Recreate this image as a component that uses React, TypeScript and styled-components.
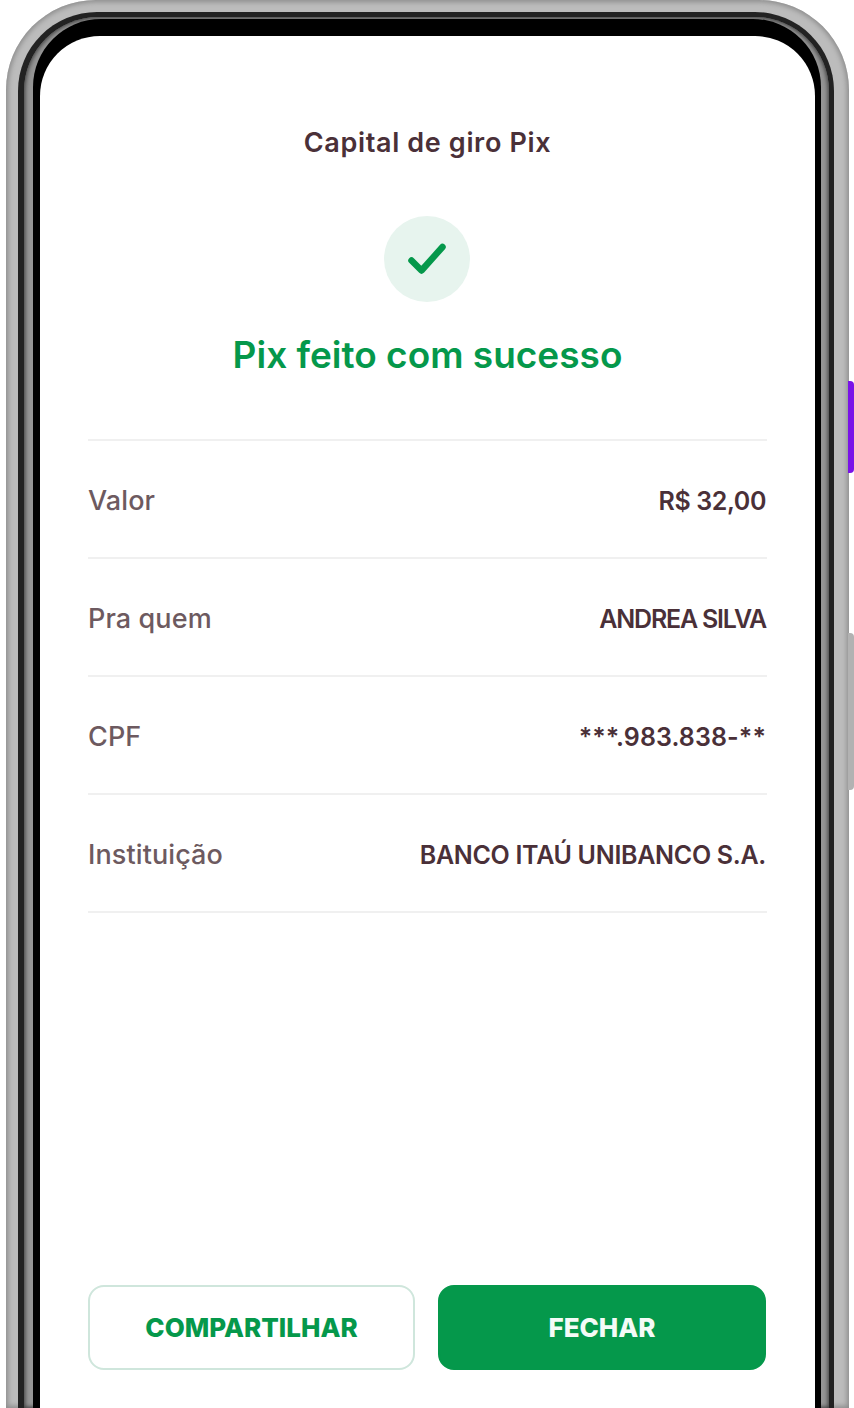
import React from "react";
import styled, { createGlobalStyle } from "styled-components";

const Global = createGlobalStyle`
  html, body { margin: 0; padding: 0; background: #fff; overflow: hidden; }
  * { box-sizing: border-box; }
  body { font-family: Inter, "Noto Sans", "Liberation Sans", sans-serif; }
`;

const Page = styled.div`
  position: relative;
  width: 854px;
  height: 1408px;
  padding-left: 6px;
  overflow: hidden;
  background: #fff;
`;

const Bezel = styled.div<{ $pad: string; $bg: string; $radius: number; $shade?: string }>`
  display: flex;
  flex-direction: column;
  width: 100%;
  height: 100%;
  padding: ${(p) => p.$pad};
  padding-bottom: 0;
  background: ${(p) => p.$bg};
  border-radius: ${(p) => p.$radius}px ${(p) => p.$radius}px 0 0;
  box-shadow: ${(p) => p.$shade ?? "none"};
`;

const Outer = styled(Bezel)`
  width: 843px;
`;

const SideButton = styled.div<{ $top: number; $height: number; $color: string }>`
  position: absolute;
  left: 848px;
  top: ${(p) => p.$top}px;
  width: 6px;
  height: ${(p) => p.$height}px;
  background: ${(p) => p.$color};
  border-radius: 0 4px 4px 0;
`;

const Screen = styled.main`
  flex: 1;
  display: flex;
  flex-direction: column;
  align-items: stretch;
  padding: 92px 48px 38px;
  background: #fff;
  border-radius: 60px 60px 0 0;
  min-height: 0;
`;

const Title = styled.h1`
  margin: 0;
  height: 30px;
  text-align: center;
  font-size: 27px;
  line-height: 30px;
  font-weight: 600;
  letter-spacing: 0.65px;
  color: #4a3038;
`;

const CheckBadge = styled.div`
  align-self: center;
  display: flex;
  align-items: center;
  justify-content: center;
  width: 86px;
  height: 86px;
  margin: 58px 1px 0 0;
  border-radius: 50%;
  background: #e7f4ee;
`;

const Heading = styled.h2`
  margin: 30px 0 0;
  height: 46px;
  text-align: center;
  font-size: 37px;
  line-height: 46px;
  font-weight: 600;
  letter-spacing: 0;
  color: #05984b;
`;

const Rows = styled.dl`
  margin: 61px 0 0;
  border-top: 2px solid #f0f0f0;
`;

const Row = styled.div`
  display: flex;
  align-items: center;
  justify-content: space-between;
  height: 118px;
  padding: 3px 1px 0 0;
  border-bottom: 2px solid #f0f0f0;
`;

const Label = styled.dt`
  font-size: 27px;
  font-weight: 500;
  letter-spacing: 0.1px;
  color: #6d5a60;
`;

const Value = styled.dd<{ $tracking: number }>`
  margin: 0;
  font-size: 25px;
  font-weight: 600;
  letter-spacing: ${(p) => p.$tracking}px;
  color: #4a3038;
`;

const Actions = styled.div`
  margin-top: auto;
  display: grid;
  grid-template-columns: 327px 328px;
  column-gap: 23px;
`;

const Button = styled.button<{ $primary?: boolean }>`
  height: 85px;
  border-radius: 16px;
  border: 2px solid ${(p) => (p.$primary ? "#05984b" : "#cfe6dc")};
  background: ${(p) => (p.$primary ? "#05984b" : "#fff")};
  color: ${(p) => (p.$primary ? "#f4fbf7" : "#05984b")};
  font-family: inherit;
  font-size: 26px;
  font-weight: 800;
  padding: 0;
`;

const rows: [string, string, number][] = [
  ["Valor", "R$ 32,00", -0.4],
  ["Pra quem", "ANDREA SILVA", -1.2],
  ["CPF", "***.983.838-**", 0.1],
  ["Instituição", "BANCO ITAÚ UNIBANCO S.A.", -0.3],
];

export default function App() {
  return (
    <Page>
      <Global />
      <SideButton $top={381} $height={92} $color="#7a12e8" />
      <SideButton $top={633} $height={157} $color="#b2b2b2" />
      <Outer
        $pad="12px 15px 0 12px"
        $bg="#bcbcbc"
        $radius={90}
        $shade="inset 0 0 5px 2px #8c8c8c"
      >
        <Bezel $pad="5px 5px 0 6px" $bg="#222" $radius={79}>
          <Bezel
            $pad="2px 8px 0 9px"
            $bg="#959595"
            $radius={74}
            $shade="inset 0 0 4px 1px #3a3a3a"
          >
            <Bezel $pad="17px 6px 0 7px" $bg="#000" $radius={68}>
              <Screen>
                <Title>Capital de giro Pix</Title>
                <CheckBadge>
                  <svg width="40" height="34" viewBox="0 0 40 34" fill="none">
                    <path
                      d="M4.5 18.5 14.5 28.5 35.5 5"
                      stroke="#05984b"
                      strokeWidth="6.5"
                      strokeLinecap="round"
                      strokeLinejoin="round"
                    />
                  </svg>
                </CheckBadge>
                <Heading>Pix feito com sucesso</Heading>
                <Rows>
                  {rows.map(([label, value, tracking]) => (
                    <Row key={label}>
                      <Label>{label}</Label>
                      <Value $tracking={tracking}>{value}</Value>
                    </Row>
                  ))}
                </Rows>
                <Actions>
                  <Button>COMPARTILHAR</Button>
                  <Button $primary>FECHAR</Button>
                </Actions>
              </Screen>
            </Bezel>
          </Bezel>
        </Bezel>
      </Outer>
    </Page>
  );
}
